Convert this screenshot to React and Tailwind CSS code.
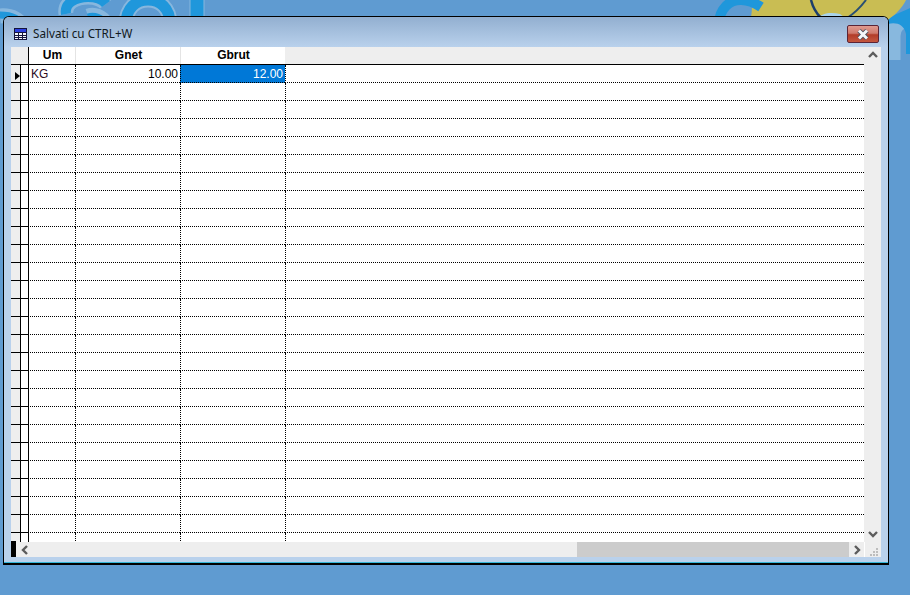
const ROWS = Array.from({ length: 27 }, (_, i) => i);

function Wallpaper() {
  return (
    <svg className="absolute left-0 top-0" width="910" height="120" viewBox="0 0 910 120" fill="none">
      <path d="M752 0 L906 0 C902 8 896 14 888 20 L750 20 C752 16 752 8 752 0 Z" fill="#c9bd53" />
      <path d="M816 20 C822 12 832 12 840 14 L848 20 Z" fill="#a9d3ea" />
      <path d="M811 0 C813 8 816 13 821 18" stroke="#1d3f6b" strokeWidth="2.5" />
      <path d="M866 0 C860 8 855 13 847 18" stroke="#2a4f73" strokeWidth="2" />
      {/* blurred logo letters behind the window */}
      <g stroke="#a9cfea" strokeWidth="15" opacity="0.55">
        <path d="M0 16 C12 15 20 20 24 28" />
        <path d="M66 14 C64 3 76 -3 88 -3 C96 -3 103 0 106 4" />
        <path d="M88 16 C94 14 102 16 106 24" />
        <path d="M126 24 C126 8 136 0 148 0 C160 0 170 8 170 24" />
        <path d="M197 -4 L197 20" />
        <path d="M893 60 L893 36 C893 24 903 20 910 20" />
      </g>
      <g stroke="#1f97db">
        <path d="M0 15 C12 15 20 19 24 27" strokeWidth="7" />
        <path d="M66 14 C64 3 76 -3 88 -3 C96 -3 103 0 106 4" strokeWidth="10" />
        <path d="M88 17 C94 15 102 17 106 25" strokeWidth="7" />
        <path d="M126 24 C126 8 136 0 148 0 C160 0 170 8 170 24" strokeWidth="11" />
        <path d="M197 -4 L197 20" strokeWidth="13" />
        <path d="M761 7 C747 -2 734 -2 726 6 C720 12 719 20 719 24" strokeWidth="10" />
      </g>
      <path d="M888 20 C894 14 902 12 910 8 L910 54 L906 54 L906 34 C904 24 896 22 888 24 Z" fill="#1f97db" />
    </svg>
  );
}

function Chevron({ points }) {
  return (
    <svg width="10" height="10" viewBox="0 0 10 10" fill="none">
      <polyline points={points} stroke="#5c5c5c" strokeWidth="2.4" />
    </svg>
  );
}

function TableIcon() {
  return (
    <svg width="14" height="12" viewBox="0 0 14 12" shapeRendering="crispEdges">
      <rect x="0" y="0" width="13" height="12" fill="#14143c" />
      <rect x="1" y="1" width="11" height="3" fill="#2a3fe0" />
      <rect x="1" y="5" width="11" height="6" fill="#f2f5fb" />
      <path d="M1 7.5H12M1 9.5H12M4.5 5V11M8.5 5V11" stroke="#14143c" strokeWidth="1" />
    </svg>
  );
}

function CloseButton() {
  return (
    <div className="flex h-[18px] w-8 items-center justify-center rounded-[2px] border border-[#5b2436] bg-[linear-gradient(#e09a90_0%,#cf7a6c_45%,#b23c28_55%,#c4573f_100%)]">
      <svg width="14" height="11" viewBox="0 0 14 11" fill="none">
        <path d="M3 1.5 L11 9.5 M11 1.5 L3 9.5" stroke="#4b4f5c" strokeWidth="4.6" />
        <path d="M3 1.5 L11 9.5 M11 1.5 L3 9.5" stroke="#f4f6fa" strokeWidth="3" />
      </svg>
    </div>
  );
}

function Grip() {
  return (
    <div className="flex h-[15px] w-4 flex-col items-end justify-end gap-px pb-px pr-[3px]">
      <div className="flex gap-px"><span className="h-[2px] w-[2px] bg-[#bdbdbd]" /></div>
      <div className="flex gap-px"><span className="h-[2px] w-[2px] bg-[#bdbdbd]" /><span className="h-[2px] w-[2px] bg-[#bdbdbd]" /></div>
      <div className="flex gap-px"><span className="h-[2px] w-[2px] bg-[#bdbdbd]" /><span className="h-[2px] w-[2px] bg-[#bdbdbd]" /><span className="h-[2px] w-[2px] bg-[#bdbdbd]" /></div>
    </div>
  );
}

function Row({ index }) {
  const first = index === 0;
  return (
    <div className="flex h-[18px] shrink-0 text-[12px] leading-[19px] text-black">
      <div className="flex w-[9px] shrink-0 border-b border-black bg-[#eeeeee]" />
      <div className="flex w-[8px] shrink-0 items-center border-b border-l border-black bg-white" />
      <div className="w-[47px] shrink-0 border-b border-l border-black pl-[2px] text-[#2b0a1e] [border-bottom-style:dotted]">
        {first ? "KG" : ""}
      </div>
      <div className="w-[105px] shrink-0 border-b border-l border-dotted border-black pr-[2px] text-right">
        {first ? "10.00" : ""}
      </div>
      <div className={`w-[105px] shrink-0 border-b border-l border-dotted border-black pr-[2px] text-right ${first ? "bg-[#0078d7] text-white" : ""}`}>
        {first ? "12.00" : ""}
      </div>
      <div className="grow border-b border-l border-dotted border-black" />
    </div>
  );
}

export default function App() {
  return (
    <div className="relative h-[595px] w-[910px] overflow-hidden bg-[#5f9bd1] pl-[3px] pt-[16px]">
      <Wallpaper />
      <div className="relative flex h-[549px] w-[886px] flex-col rounded-t-[6px] border border-black border-b-[2px] bg-[#b9d1ec] pl-[7px] pr-[7px] font-['Liberation_Sans',sans-serif]">
        <div className="-ml-[7px] -mr-[7px] flex h-[30px] shrink-0 items-center rounded-t-[5px] bg-[linear-gradient(#92afd0,#b9d1ec)] pl-[10px] pr-[9px] pt-[4px]">
          <TableIcon />
          <span className="ml-[5px] grow font-['Noto_Sans',sans-serif] text-[11.7px] text-[#101820]">Salvati cu CTRL+W</span>
          <CloseButton />
        </div>

        <div className="flex min-h-0 grow flex-col bg-[#eeeeee]">
          <div className="flex min-h-0 grow">
            <div className="flex min-w-0 grow flex-col bg-white">
              <div className="flex h-[18px] shrink-0 border-b border-black bg-[#eeeeee] text-center text-[12px] font-bold leading-[16px] text-black">
                <div className="w-[17px] shrink-0" />
                <div className="w-[47px] shrink-0 border-l border-black bg-white pl-px">Um</div>
                <div className="w-[105px] shrink-0 border-l border-[#e4e4e4] bg-white pl-px">Gnet</div>
                <div className="w-[105px] shrink-0 border-l border-[#e4e4e4] bg-white pl-px">Gbrut</div>
              </div>
              <div className="relative flex h-[477px] flex-col overflow-hidden">
                {ROWS.map((i) => <Row key={i} index={i} />)}
                {/* current record marker */}
                <svg className="absolute left-[4px] top-[7px]" width="5" height="8" viewBox="0 0 5 8">
                  <path d="M0 0 L5 4 L0 8 Z" fill="#000" />
                </svg>
              </div>
            </div>
            <div className="flex w-[17px] shrink-0 flex-col items-center justify-between bg-[#eeeeee] py-[3px]">
              <Chevron points="1,7 5,3 9,7" />
              <Chevron points="1,3 5,7 9,3" />
            </div>
          </div>

          <div className="relative flex h-[15px] shrink-0 bg-[#eeeeee] pl-[5px]">
            {/* record mark box pokes one pixel above the scrollbar */}
            <div className="absolute -top-px left-0 h-[16px] w-[5px] bg-black" />
            <div className="flex w-[561px] shrink-0 items-center pl-[4px]">
              <Chevron points="7,1 3,5 7,9" />
            </div>
            <div className="w-[272px] shrink-0 bg-[#cccccc]" />
            <div className="flex w-[15px] shrink-0 items-center justify-center">
              <Chevron points="3,1 7,5 3,9" />
            </div>
            <div className="w-px shrink-0 bg-white" />
            <Grip />
          </div>
        </div>
        <div className="h-[5px] shrink-0" />
        <div className="-ml-[7px] -mr-[7px] h-px shrink-0 bg-[#35b6d8]" />
      </div>
    </div>
  );
}
